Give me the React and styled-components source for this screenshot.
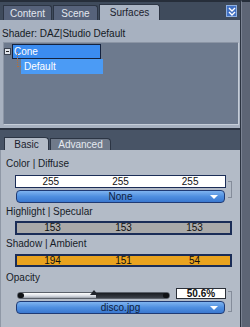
import React from "react";
import styled, { createGlobalStyle } from "styled-components";

const GlobalStyle = createGlobalStyle`
  html, body {
    margin: 0;
    padding: 0;
    background: #5f6777;
  }
  body {
    font-family: "Liberation Sans", Arial, sans-serif;
    font-size: 10px;
  }
`;

const tabs = ["Content", "Scene", "Surfaces"];

function TripleField({ values, tone, width }) {
    return (
        <Field tone={tone} width={width}>
            {values.map((v, i) => (
                <Cell key={i}>{v}</Cell>
            ))}
        </Field>
    );
}

function Dropdown({ label }) {
    return (
        <Select>
            <SelectText>{label}</SelectText>
            <Arrow />
        </Select>
    );
}

function App() {
    return (
        <Frame>
            <GlobalStyle />
            <Main>
                <TopBar>
                    {tabs.map((t) => (
                        <Tab key={t} active={t === "Surfaces"} w={t === "Content" ? 49 : t === "Scene" ? 45 : 61}>
                            {t}
                        </Tab>
                    ))}
                    <MenuButton>
                        <svg width="8" height="9" viewBox="0 0 8 9">
                            <path d="M1 1 L4 4 L7 1 M1 5 L4 8 L7 5" stroke="#fff" strokeWidth="1.4" fill="none" />
                        </svg>
                    </MenuButton>
                </TopBar>

                <UpperPanel>
                    <ShaderLabel>Shader: DAZ|Studio Default</ShaderLabel>
                    <TreeBox>
                        <TreeRow>
                            <Expander />
                            <Node selected>Cone</Node>
                        </TreeRow>
                        <TreeRow>
                            <Branch />
                            <Node child>Default</Node>
                        </TreeRow>
                    </TreeBox>
                </UpperPanel>

                <Divider />

                <SubTabs>
                    <SubTab active w={45}>Basic</SubTab>
                    <SubTab w={61}>Advanced</SubTab>
                </SubTabs>

                <LowerPanel>
                    <Label top={7}>Color | Diffuse</Label>
                    <Group top={4}>
                        <Stack>
                            <TripleField values={["255", "255", "255"]} tone="white" width={211} />
                            <Dropdown label="None" />
                        </Stack>
                        <Bracket h={17} />
                    </Group>

                    <Label top={2}>Highlight | Specular</Label>
                    <Group top={2}>
                        <TripleField values={["153", "153", "153"]} tone="gray" width={217} />
                    </Group>

                    <Label top={2}>Shadow | Ambient</Label>
                    <Group top={3}>
                        <TripleField values={["194", "151", "54"]} tone="orange" width={217} />
                    </Group>

                    <Label top={4}>Opacity</Label>
                    <Group top={3}>
                        <Stack>
                            <SliderRow>
                                <Track>
                                    <TrackFill style={{ width: "49%" }} />
                                    <Thumb style={{ left: "50.6%" }} />
                                </Track>
                                <ValueBox>50.6%</ValueBox>
                            </SliderRow>
                            <Dropdown label="disco.jpg" />
                        </Stack>
                        <Bracket h={21} />
                    </Group>
                </LowerPanel>
            </Main>
            <SideStrip />
        </Frame>
    );
}

export default App;

const Frame = styled.div`
display: flex;
width: 250px;
height: 327px;
overflow: hidden;
`

const Main = styled.div`
width: 240px;
display: flex;
flex-direction: column;
border-right: 1px solid #2b3340;
`

const SideStrip = styled.div`
flex: 1;
background: #5d6575;
border-top: 2px solid #262e3a;
border-left: 1px solid #7a8292;
`

const TopBar = styled.div`
height: 18px;
border-top: 2px solid #262e3a;
background: #3f4b5c;
display: flex;
align-items: flex-end;
padding-left: 3px;
`

const Tab = styled.div`
width: ${(p) => p.w}px;
height: ${(p) => (p.active ? 16 : 15)}px;
box-sizing: border-box;
display: flex;
align-items: center;
justify-content: center;
font-size: 10px;
color: ${(p) => (p.active ? "#1b222e" : "#e2e7ef")};
background: ${(p) => (p.active ? "#aab4c3" : "#56627a")};
border: 1px solid #2c3544;
border-bottom: none;
border-top-right-radius: 3px;
margin-right: 1px;
`

const MenuButton = styled.div`
margin-left: auto;
margin-right: 3px;
margin-bottom: 3px;
width: 11px;
height: 12px;
box-sizing: border-box;
background: #3f6fc2;
border: 1px solid #8fb0e0;
display: flex;
align-items: center;
justify-content: center;
`

const UpperPanel = styled.div`
height: 108px;
background: #a7b1c0;
display: flex;
flex-direction: column;
padding: 0 1px 3px 3px;
box-sizing: border-box;
`

const ShaderLabel = styled.div`
height: 22px;
padding: 5px 0 0 0;
margin-left: -1px;
box-sizing: border-box;
line-height: 17px;
color: #141a24;
font-size: 10px;
`

const TreeBox = styled.div`
flex: 1;
background: #6d7a8e;
border: 1px solid #c6ced9;
border-top-color: #8b95a5;
border-left-color: #8b95a5;
padding-top: 1px;
`

const TreeRow = styled.div`
display: flex;
align-items: center;
height: 15px;
`

const Expander = styled.div`
width: 7px;
height: 7px;
box-sizing: border-box;
margin: 0 1px 0 0;
background: #dfe3ea;
border: 1px solid #3a4250;
position: relative;
&::after {
    content: "";
    position: absolute;
    left: 1px;
    right: 1px;
    top: 2px;
    height: 1px;
    background: #222;
}
`

const Branch = styled.div`
width: 4px;
height: 15px;
margin-left: 13px;
margin-top: -7px;
box-sizing: border-box;
border-left: 1px dotted #b0703e;
border-bottom: 1px dotted #b0703e;
align-self: flex-start;
`

const Node = styled.div`
width: ${(p) => (p.child ? 82 : 89)}px;
height: 15px;
box-sizing: border-box;
line-height: 13px;
padding-left: ${(p) => (p.child ? 2 : 1)}px;
color: #ffffff;
font-size: 10px;
background: ${(p) => (p.selected ? "#3b8cf0" : "#4b9bf5")};
border: 1px solid ${(p) => (p.selected ? "#14223e" : "#4b9bf5")};
`

const Divider = styled.div`
height: 2px;
background: #2a3240;
`

const SubTabs = styled.div`
height: 20px;
background: #485466;
display: flex;
align-items: flex-end;
padding-left: 4px;
`

const SubTab = styled.div`
width: ${(p) => p.w}px;
height: ${(p) => (p.active ? 13 : 12)}px;
box-sizing: border-box;
display: flex;
align-items: center;
justify-content: center;
font-size: 10px;
color: ${(p) => (p.active ? "#1b222e" : "#e6eaf1")};
background: ${(p) => (p.active ? "#b3bbc7" : "#707a8a")};
border: 1px solid #2c3544;
border-bottom: none;
border-top-right-radius: 4px;
margin-right: 1px;
`

const LowerPanel = styled.div`
flex: 1;
background: #b3bbc7;
padding-left: 5px;
display: flex;
flex-direction: column;
border-left: 1px solid #8f98a6;
`

const Label = styled.div`
margin-top: ${(p) => p.top}px;
height: 14px;
line-height: 14px;
color: #161c27;
font-size: 10px;
`

const Group = styled.div`
margin-top: ${(p) => p.top}px;
margin-left: 9px;
display: flex;
align-items: center;
`

const Stack = styled.div`
display: flex;
flex-direction: column;
gap: 2px;
`

const fieldTones = {
    white: "#ffffff",
    gray: "#a9a9a9",
    orange: "#e9a31f",
};

const Field = styled.div`
width: ${(p) => p.width}px;
height: ${(p) => (p.tone === "gray" ? 14 : 13)}px;
box-sizing: border-box;
display: grid;
grid-template-columns: 1fr 1fr 1fr;
align-items: center;
background: ${(p) => fieldTones[p.tone]};
border: ${(p) => (p.tone === "white" ? "1px" : "2px")} solid #1b2d57;
color: #111;
font-size: 10px;
`

const Cell = styled.span`
text-align: center;
line-height: 10px;
`

const Select = styled.div`
width: 209px;
height: 13px;
margin-left: 1px;
box-sizing: border-box;
border: 1px solid #1f3a74;
border-radius: 4px;
background: linear-gradient(#7fb4f0, #4f8fe0 50%, #3a78d0);
display: flex;
align-items: center;
position: relative;
`

const SelectText = styled.span`
flex: 1;
text-align: center;
color: #0f1c3a;
font-size: 10px;
line-height: 11px;
`

const Arrow = styled.span`
position: absolute;
right: 6px;
top: 4px;
width: 0;
height: 0;
border-left: 4px solid transparent;
border-right: 4px solid transparent;
border-top: 4px solid #ffffff;
`

const Bracket = styled.div`
width: 4px;
height: ${(p) => p.h}px;
margin-left: 2px;
box-sizing: border-box;
border: 1px solid #848c9a;
border-left: none;
`

const SliderRow = styled.div`
display: flex;
align-items: center;
height: 11px;
`

const Track = styled.div`
width: 153px;
height: 7px;
margin-left: 2px;
margin-top: 3px;
box-sizing: border-box;
background: linear-gradient(#1a1d23, #3a3f48);
border: 1px solid #5a606a;
border-radius: 3px;
position: relative;
&::before, &::after {
    content: "";
    position: absolute;
    top: 0;
    width: 6px;
    height: 5px;
    border-radius: 2px;
    background: #101216;
    z-index: 1;
}
&::before { left: 0; }
&::after { right: 0; }
`

const TrackFill = styled.div`
position: absolute;
left: 4px;
top: 0;
height: 5px;
background: linear-gradient(#ffffff, #d6dae2 60%, #9aa0aa);
`

const Thumb = styled.div`
position: absolute;
top: -3px;
margin-left: -4px;
width: 0;
height: 0;
border-left: 4px solid transparent;
border-right: 4px solid transparent;
border-bottom: 5px solid #20242c;
z-index: 2;
`

const ValueBox = styled.div`
margin-left: 6px;
width: 50px;
height: 11px;
box-sizing: border-box;
background: #ffffff;
border: 1px solid #2a2f38;
font-weight: bold;
font-size: 10px;
line-height: 9px;
text-align: center;
color: #111;
`
